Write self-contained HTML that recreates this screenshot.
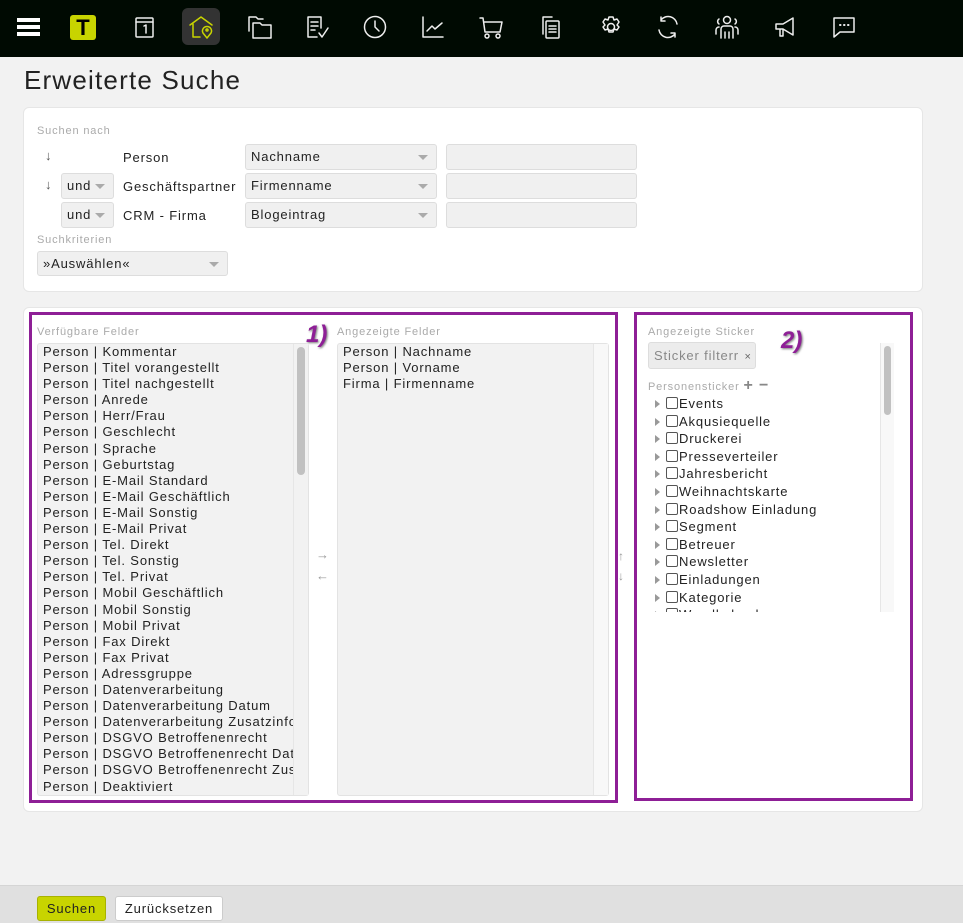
<!DOCTYPE html>
<html><head><meta charset="utf-8">
<style>
*{box-sizing:border-box;margin:0;padding:0}
body{width:963px;height:923px;background:#f2f2f2;font-family:"Liberation Sans",sans-serif;color:#222;position:relative;overflow:hidden;letter-spacing:0.85px}
.a{position:absolute}
.nav{left:0;top:0;width:963px;height:57px;background:#000a02}
.ic{position:absolute;top:14px;width:26px;height:26px}
.ic svg{width:26px;height:26px;fill:none;stroke:#eee;stroke-width:1.5;stroke-linecap:round;stroke-linejoin:round}
.card{background:#fff;border-radius:6px;border:1px solid #e6e6e6}
.lbl{font-size:11px;color:#aaa}
.sel{background:#f0f0f0;border:1px solid #ddd;border-radius:3px;font-size:13px;color:#222;padding-left:5px;line-height:24px}
.sel:after{content:"";position:absolute;right:8px;top:10px;border-left:5px solid transparent;border-right:5px solid transparent;border-top:5px solid #aaa}
.inp{background:#f0f0f0;border:1px solid #ddd;border-radius:3px}
.txt{font-size:13px;color:#222}
.list{background:#f2f2f2;border:1px solid #e3e3e3;border-radius:3px;overflow:hidden}
.list div{font-size:13px;line-height:16.1px;padding-left:5px;white-space:nowrap}
.pbox{border:3px solid #8e1f96}
.tree div{font-size:13px;height:17.6px;line-height:17px;padding-left:16px;white-space:nowrap;position:relative}
.tree div:before{content:"";position:absolute;left:11px;top:5px;border-top:4px solid transparent;border-bottom:4px solid transparent;border-left:5px solid #999}
.tree span{display:inline-block;width:12px;height:12px;border:1px solid #555;border-radius:2px;vertical-align:-1px;margin-left:6px;margin-right:1px}
.num{font-size:24px;font-weight:bold;color:#8e1f96;font-style:italic;text-shadow:1px 1px 2px #777;letter-spacing:0}
</style></head><body>
<div class="a nav">
 <div class="a" style="left:17px;top:18px;width:23px;height:4px;background:#fff"></div>
 <div class="a" style="left:17px;top:25px;width:23px;height:4px;background:#fff"></div>
 <div class="a" style="left:17px;top:32px;width:23px;height:4px;background:#fff"></div>
 <div class="a" style="left:70px;top:15px;width:26px;height:25px;background:#c8d400;border-radius:3px;color:#000;font-weight:bold;font-size:22px;text-align:center;line-height:25px;letter-spacing:0">T</div>
 <div class="ic" style="left:132px"><svg viewBox="0 0 26 26"><rect x="4" y="4" width="17" height="19" rx="1"/><path d="M4 8h17M12 12l2-1v8"/></svg></div>
 <div class="a" style="left:182px;top:8px;width:38px;height:37px;background:#333;border-radius:6px"></div>
 <div class="ic" style="left:188px;top:14px"><svg viewBox="0 0 26 26" style="stroke:#c8d400"><path d="M2 11L13 3l11 8M5 10v13h7"/><path d="M19 24l-4-5a4.5 4.5 0 1 1 8 0z"/><circle cx="19" cy="16" r="1"/></svg></div>
 <div class="ic" style="left:247px"><svg viewBox="0 0 26 26"><path d="M2 17V3h7l2 2h5M6 24V9h7l2 2h9v13z"/></svg></div>
 <div class="ic" style="left:304px"><svg viewBox="0 0 26 26"><path d="M17 14V3H4v20h9M7 8h7M7 12h7M7 16h4M15 19l3 4 6-9"/></svg></div>
 <div class="ic" style="left:362px"><svg viewBox="0 0 26 26"><circle cx="13" cy="13" r="10.5"/><path d="M13 7v6l4 4"/></svg></div>
 <div class="ic" style="left:420px"><svg viewBox="0 0 26 26"><path d="M3 3v20h20M7 17l5-5 3 3 7-6"/></svg></div>
 <div class="ic" style="left:479px"><svg viewBox="0 0 26 26"><path d="M1 4h3l2 14h15l2-10H5"/><circle cx="8" cy="22" r="2"/><circle cx="19" cy="22" r="2"/></svg></div>
 <div class="ic" style="left:538px"><svg viewBox="0 0 26 26"><path d="M5 20V3h9"/><rect x="8" y="7" width="13" height="17" rx="1"/><path d="M11 12h7M11 15h7M11 18h7"/></svg></div>
 <div class="ic" style="left:598px"><svg viewBox="0 0 26 26"><circle cx="13" cy="13" r="3.5"/><path d="M11 3h4l1 3 3-1 2 3-2 3 2 2-2 3-3-1-1 3h-4l-1-3-3 1-2-3 2-2-2-3 2-3 3 1z"/></svg></div>
 <div class="ic" style="left:655px"><svg viewBox="0 0 26 26"><path d="M22 10A9 9 0 0 0 6 6M4 16a9 9 0 0 0 16 4M6 3v4h4M20 23v-4h-4"/></svg></div>
 <div class="ic" style="left:714px"><svg viewBox="0 0 26 26"><circle cx="13" cy="6" r="3.5"/><path d="M7 24V15a3 3 0 0 1 3-3h6a3 3 0 0 1 3 3v9M11 24v-6M15 24v-6M5 5a3 3 0 0 0 0 5M21 5a3 3 0 0 1 0 5M2 20v-4a3 3 0 0 1 3-3M24 20v-4a3 3 0 0 0-3-3"/></svg></div>
 <div class="ic" style="left:773px"><svg viewBox="0 0 26 26"><path d="M3 10h7l10-6v17l-10-6H3zM7 15v7h3v-7"/></svg></div>
 <div class="ic" style="left:831px"><svg viewBox="0 0 26 26"><path d="M3 4h20v14H9l-6 5z"/><path d="M9 11h.5M13 11h.5M17 11h.5" stroke-width="2"/></svg></div>
</div>
<div class="a" style="left:24px;top:65px;font-size:26px;color:#222;letter-spacing:1.2px">Erweiterte Suche</div>

<div class="a card" style="left:23px;top:107px;width:900px;height:185px"></div>
<div class="a lbl" style="left:37px;top:125px">Suchen nach</div>
<div class="a txt" style="left:45px;top:148px;color:#555">↓</div>
<div class="a txt" style="left:45px;top:177px;color:#555">↓</div>
<div class="a txt" style="left:123px;top:150px">Person</div>
<div class="a txt" style="left:123px;top:179px">Geschäftspartner</div>
<div class="a txt" style="left:123px;top:208px">CRM - Firma</div>
<div class="a sel" style="left:61px;top:173px;width:53px;height:26px">und</div>
<div class="a sel" style="left:61px;top:202px;width:53px;height:26px">und</div>
<div class="a sel" style="left:245px;top:144px;width:192px;height:26px">Nachname</div>
<div class="a sel" style="left:245px;top:173px;width:192px;height:26px">Firmenname</div>
<div class="a sel" style="left:245px;top:202px;width:192px;height:26px">Blogeintrag</div>
<div class="a inp" style="left:446px;top:144px;width:191px;height:26px"></div>
<div class="a inp" style="left:446px;top:173px;width:191px;height:26px"></div>
<div class="a inp" style="left:446px;top:202px;width:191px;height:26px"></div>
<div class="a lbl" style="left:37px;top:234px">Suchkriterien</div>
<div class="a sel" style="left:37px;top:251px;width:191px;height:25px">»Auswählen«</div>

<div class="a card" style="left:23px;top:307px;width:900px;height:505px"></div>
<div class="a pbox" style="left:29px;top:312px;width:589px;height:491px"></div>
<div class="a pbox" style="left:634px;top:312px;width:279px;height:489px"></div>
<div class="a lbl" style="left:37px;top:326px">Verfügbare Felder</div>
<div class="a lbl" style="left:337px;top:326px">Angezeigte Felder</div>
<div class="a num" style="left:306px;top:321px">1)</div>
<div class="a num" style="left:781px;top:327px">2)</div>
<div class="a list" style="left:37px;top:343px;width:272px;height:453px">
<div>Person | Kommentar</div><div>Person | Titel vorangestellt</div><div>Person | Titel nachgestellt</div><div>Person | Anrede</div><div>Person | Herr/Frau</div><div>Person | Geschlecht</div><div>Person | Sprache</div><div>Person | Geburtstag</div><div>Person | E-Mail Standard</div><div>Person | E-Mail Geschäftlich</div><div>Person | E-Mail Sonstig</div><div>Person | E-Mail Privat</div><div>Person | Tel. Direkt</div><div>Person | Tel. Sonstig</div><div>Person | Tel. Privat</div><div>Person | Mobil Geschäftlich</div><div>Person | Mobil Sonstig</div><div>Person | Mobil Privat</div><div>Person | Fax Direkt</div><div>Person | Fax Privat</div><div>Person | Adressgruppe</div><div>Person | Datenverarbeitung</div><div>Person | Datenverarbeitung Datum</div><div>Person | Datenverarbeitung Zusatzinfo</div><div>Person | DSGVO Betroffenenrecht</div><div>Person | DSGVO Betroffenenrecht Datum</div><div>Person | DSGVO Betroffenenrecht Zusatz</div><div>Person | Deaktiviert</div>
</div>
<div class="a" style="left:293px;top:344px;width:15px;height:451px;background:#f2f2f2;border-left:1px solid #e6e6e6"></div>
<div class="a" style="left:297px;top:347px;width:8px;height:128px;background:#c1c1c1;border-radius:4px"></div>
<div class="a list" style="left:337px;top:343px;width:272px;height:453px">
<div>Person | Nachname</div><div>Person | Vorname</div><div>Firma | Firmenname</div>
</div>
<div class="a" style="left:593px;top:344px;width:15px;height:451px;background:#f8f8f8;border-left:1px solid #e6e6e6"></div>
<div class="a" style="left:316px;top:547px;font-size:13px;color:#999;font-weight:bold">→</div>
<div class="a" style="left:316px;top:568px;font-size:13px;color:#999;font-weight:bold">←</div>
<div class="a" style="left:618px;top:549px;font-size:12px;color:#999;z-index:3;font-weight:bold">↑</div>
<div class="a" style="left:618px;top:569px;font-size:12px;color:#999;z-index:3;font-weight:bold">↓</div>

<div class="a lbl" style="left:648px;top:326px">Angezeigte Sticker</div>
<div class="a" style="left:648px;top:342px;width:108px;height:27px;background:#ececec;border:1px solid #ddd;border-radius:3px;font-size:13px;color:#888;line-height:25px;padding-left:5px;white-space:nowrap">Sticker filterr <span style="color:#666;font-size:11px;margin-left:1px">×</span></div>
<div class="a lbl" style="left:648px;top:377px">Personensticker <span style="font-size:16px;color:#888;font-weight:bold">+ −</span></div>
<div class="a tree" style="left:644px;top:395px;width:235px;height:217px;overflow:hidden">
<div><span></span>Events</div><div><span></span>Akqusiequelle</div><div><span></span>Druckerei</div><div><span></span>Presseverteiler</div><div><span></span>Jahresbericht</div><div><span></span>Weihnachtskarte</div><div><span></span>Roadshow Einladung</div><div><span></span>Segment</div><div><span></span>Betreuer</div><div><span></span>Newsletter</div><div><span></span>Einladungen</div><div><span></span>Kategorie</div><div><span></span>Wandkalender</div>
</div>
<div class="a" style="left:880px;top:343px;width:14px;height:269px;background:#f8f8f8;border-left:1px solid #e6e6e6"></div>
<div class="a" style="left:884px;top:346px;width:7px;height:69px;background:#c1c1c1;border-radius:4px"></div>

<div class="a" style="left:0;top:885px;width:963px;height:38px;background:#e0e0e0;border-top:1px solid #d5d5d5"></div>
<div class="a" style="left:37px;top:896px;width:69px;height:25px;background:#c8d400;border:1px solid #a8b200;border-radius:3px;font-size:13px;text-align:center;line-height:23px">Suchen</div>
<div class="a" style="left:115px;top:896px;width:108px;height:25px;background:#fff;border:1px solid #ccc;border-radius:3px;font-size:13px;text-align:center;line-height:23px">Zurücksetzen</div>
</body></html>
